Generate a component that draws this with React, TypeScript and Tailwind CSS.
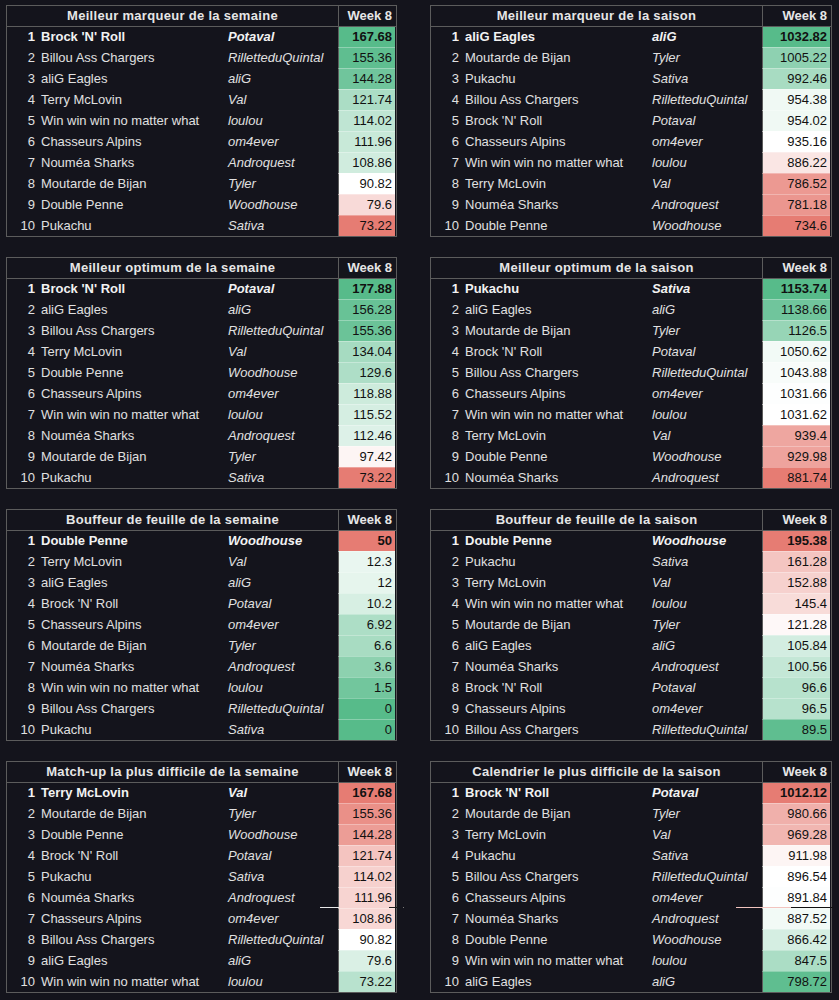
import React from "react";

type Row = [string, string, number, number]; // team, owner, value, t (-1 red .. 1 green)

interface TableData {
  title: string;
  rows: Row[];
}

const tables: TableData[] = [
  {
    title: "Meilleur marqueur de la semaine",
    rows: [
      ["Brock 'N' Roll", "Potaval", 167.68, 1],
      ["Billou Ass Chargers", "RilletteduQuintal", 155.36, 0.95],
      ["aliG Eagles", "aliG", 144.28, 0.85],
      ["Terry McLovin", "Val", 121.74, 0.5],
      ["Win win win no matter what", "loulou", 114.02, 0.38],
      ["Chasseurs Alpins", "om4ever", 111.96, 0.33],
      ["Nouméa Sharks", "Androquest", 108.86, 0.28],
      ["Moutarde de Bijan", "Tyler", 90.82, 0],
      ["Double Penne", "Woodhouse", 79.6, -0.28],
      ["Pukachu", "Sativa", 73.22, -1],
    ],
  },
  {
    title: "Meilleur marqueur de la saison",
    rows: [
      ["aliG Eagles", "aliG", 1032.82, 1],
      ["Moutarde de Bijan", "Tyler", 1005.22, 0.67],
      ["Pukachu", "Sativa", 992.46, 0.52],
      ["Billou Ass Chargers", "RilletteduQuintal", 954.38, 0.09],
      ["Brock 'N' Roll", "Potaval", 954.02, 0.09],
      ["Chasseurs Alpins", "om4ever", 935.16, 0],
      ["Win win win no matter what", "loulou", 886.22, -0.19],
      ["Terry McLovin", "Val", 786.52, -0.78],
      ["Nouméa Sharks", "Androquest", 781.18, -0.8],
      ["Double Penne", "Woodhouse", 734.6, -1],
    ],
  },
  {
    title: "Meilleur optimum de la semaine",
    rows: [
      ["Brock 'N' Roll", "Potaval", 177.88, 1],
      ["aliG Eagles", "aliG", 156.28, 0.9],
      ["Billou Ass Chargers", "RilletteduQuintal", 155.36, 0.88],
      ["Terry McLovin", "Val", 134.04, 0.53],
      ["Double Penne", "Woodhouse", 129.6, 0.48],
      ["Chasseurs Alpins", "om4ever", 118.88, 0.3],
      ["Win win win no matter what", "loulou", 115.52, 0.25],
      ["Nouméa Sharks", "Androquest", 112.46, 0.2],
      ["Moutarde de Bijan", "Tyler", 97.42, -0.08],
      ["Pukachu", "Sativa", 73.22, -1],
    ],
  },
  {
    title: "Meilleur optimum de la saison",
    rows: [
      ["Pukachu", "Sativa", 1153.74, 1],
      ["aliG Eagles", "aliG", 1138.66, 0.85],
      ["Moutarde de Bijan", "Tyler", 1126.5, 0.62],
      ["Brock 'N' Roll", "Potaval", 1050.62, 0.08],
      ["Billou Ass Chargers", "RilletteduQuintal", 1043.88, 0.04],
      ["Chasseurs Alpins", "om4ever", 1031.66, 0.01],
      ["Win win win no matter what", "loulou", 1031.62, 0],
      ["Terry McLovin", "Val", 939.4, -0.68],
      ["Double Penne", "Woodhouse", 929.98, -0.7],
      ["Nouméa Sharks", "Androquest", 881.74, -1],
    ],
  },
  {
    title: "Bouffeur de feuille de la semaine",
    rows: [
      ["Double Penne", "Woodhouse", 50, -1],
      ["Terry McLovin", "Val", 12.3, 0.13],
      ["aliG Eagles", "aliG", 12, 0.15],
      ["Brock 'N' Roll", "Potaval", 10.2, 0.24],
      ["Chasseurs Alpins", "om4ever", 6.92, 0.49],
      ["Moutarde de Bijan", "Tyler", 6.6, 0.52],
      ["Nouméa Sharks", "Androquest", 3.6, 0.68],
      ["Win win win no matter what", "loulou", 1.5, 0.84],
      ["Billou Ass Chargers", "RilletteduQuintal", 0, 1],
      ["Pukachu", "Sativa", 0, 1],
    ],
  },
  {
    title: "Bouffeur de feuille de la saison",
    rows: [
      ["Double Penne", "Woodhouse", 195.38, -1],
      ["Pukachu", "Sativa", 161.28, -0.44],
      ["Terry McLovin", "Val", 152.88, -0.35],
      ["Win win win no matter what", "loulou", 145.4, -0.27],
      ["Moutarde de Bijan", "Tyler", 121.28, -0.05],
      ["aliG Eagles", "aliG", 105.84, 0.26],
      ["Nouméa Sharks", "Androquest", 100.56, 0.35],
      ["Brock 'N' Roll", "Potaval", 96.6, 0.43],
      ["Chasseurs Alpins", "om4ever", 96.5, 0.43],
      ["Billou Ass Chargers", "RilletteduQuintal", 89.5, 0.95],
    ],
  },
  {
    title: "Match-up la plus difficile de la semaine",
    rows: [
      ["Terry McLovin", "Val", 167.68, -1],
      ["Moutarde de Bijan", "Tyler", 155.36, -0.85],
      ["Double Penne", "Woodhouse", 144.28, -0.75],
      ["Brock 'N' Roll", "Potaval", 121.74, -0.45],
      ["Pukachu", "Sativa", 114.02, -0.35],
      ["Nouméa Sharks", "Androquest", 111.96, -0.33],
      ["Chasseurs Alpins", "om4ever", 108.86, -0.3],
      ["Billou Ass Chargers", "RilletteduQuintal", 90.82, 0],
      ["aliG Eagles", "aliG", 79.6, 0.22],
      ["Win win win no matter what", "loulou", 73.22, 0.42],
    ],
  },
  {
    title: "Calendrier le plus difficile de la saison",
    rows: [
      ["Brock 'N' Roll", "Potaval", 1012.12, -1],
      ["Moutarde de Bijan", "Tyler", 980.66, -0.6],
      ["Terry McLovin", "Val", 969.28, -0.56],
      ["Pukachu", "Sativa", 911.98, -0.08],
      ["Billou Ass Chargers", "RilletteduQuintal", 896.54, 0],
      ["Chasseurs Alpins", "om4ever", 891.84, 0.01],
      ["Nouméa Sharks", "Androquest", 887.52, 0.08],
      ["Double Penne", "Woodhouse", 866.42, 0.25],
      ["Win win win no matter what", "loulou", 847.5, 0.5],
      ["aliG Eagles", "aliG", 798.72, 0.95],
    ],
  },
];

function scaleColor(t: number): string {
  const green = [87, 187, 138];
  const red = [230, 124, 115];
  const c = t >= 0 ? green : red;
  const a = Math.min(1, Math.abs(t));
  const mix = (v: number) => Math.round(255 + (v - 255) * a);
  return `rgb(${mix(c[0])}, ${mix(c[1])}, ${mix(c[2])})`;
}

function Table({ data, wide, index }: { data: TableData; wide: boolean; index: number }) {
  const weekW = wide ? "w-[68px]" : "w-[57px]";
  return (
    <div className="relative border border-[#5c5c5c] text-[13px]">
      <div className="flex h-[21px] border-b border-[#5c5c5c] leading-[20px] font-bold text-[#e6e6e6]">
        <div className="w-[331px] text-center tracking-[0.3px]">{data.title}</div>
        <div className={`${weekW} border-l border-[#5c5c5c] pr-[3px] text-right`}>Week 8</div>
      </div>
      {data.rows.map((r, i) => {
        const first = i === 0;
        return (
          <div
            key={i}
            className={`flex leading-[20px] ${first ? "h-[20px] font-bold text-[#f2f2f2]" : "h-[21px] text-[#e0e0e0]"}`}
          >
            <div className={`w-[31px] pr-[3px] text-right ${first ? "" : "border-t border-transparent"}`}>{i + 1}</div>
            <div className={`w-[187px] pl-[3px] whitespace-nowrap ${first ? "" : "border-t border-transparent"}`}>{r[0]}</div>
            <div className={`w-[113px] pl-[3px] italic whitespace-nowrap ${first ? "" : "border-t border-transparent"}`}>{r[1]}</div>
            <div
              className={`${weekW} border-l border-l-[#5c5c5c] pr-[3px] text-right text-[#111111] ${first ? "" : "border-t border-t-white/30"}`}
              style={{ backgroundColor: scaleColor(r[3]) }}
            >
              {String(r[2])}
            </div>
          </div>
        );
      })}
      {index === 6 && (
        <>
          <div className="absolute left-[313px] top-[145px] h-px w-[19px] bg-[#e8e8e8]" />
          <div className="absolute left-[382px] top-[145px] h-px w-[9px] bg-[#1a1a1a]" />
          <div className="absolute left-[396px] top-[145px] h-px w-px bg-[#777777]" />
        </>
      )}
      {index === 7 && (
        <>
          <div className="absolute left-[305px] top-[145px] h-px w-[55px] bg-[#f2c4bf]" />
          <div className="absolute left-[360px] top-[145px] h-px w-[42px] bg-[#111111]" />
        </>
      )}
    </div>
  );
}

export default function App() {
  return (
    <div className="min-h-screen w-full bg-[#14141c] font-['Liberation_Sans',Arial,sans-serif]">
      <div className="grid grid-cols-[391px_402px] gap-x-[33px] gap-y-[20px] pl-[6px] pt-[5px]">
        {tables.map((t, i) => (
          <Table key={i} data={t} wide={i % 2 === 1} index={i} />
        ))}
      </div>
    </div>
  );
}
